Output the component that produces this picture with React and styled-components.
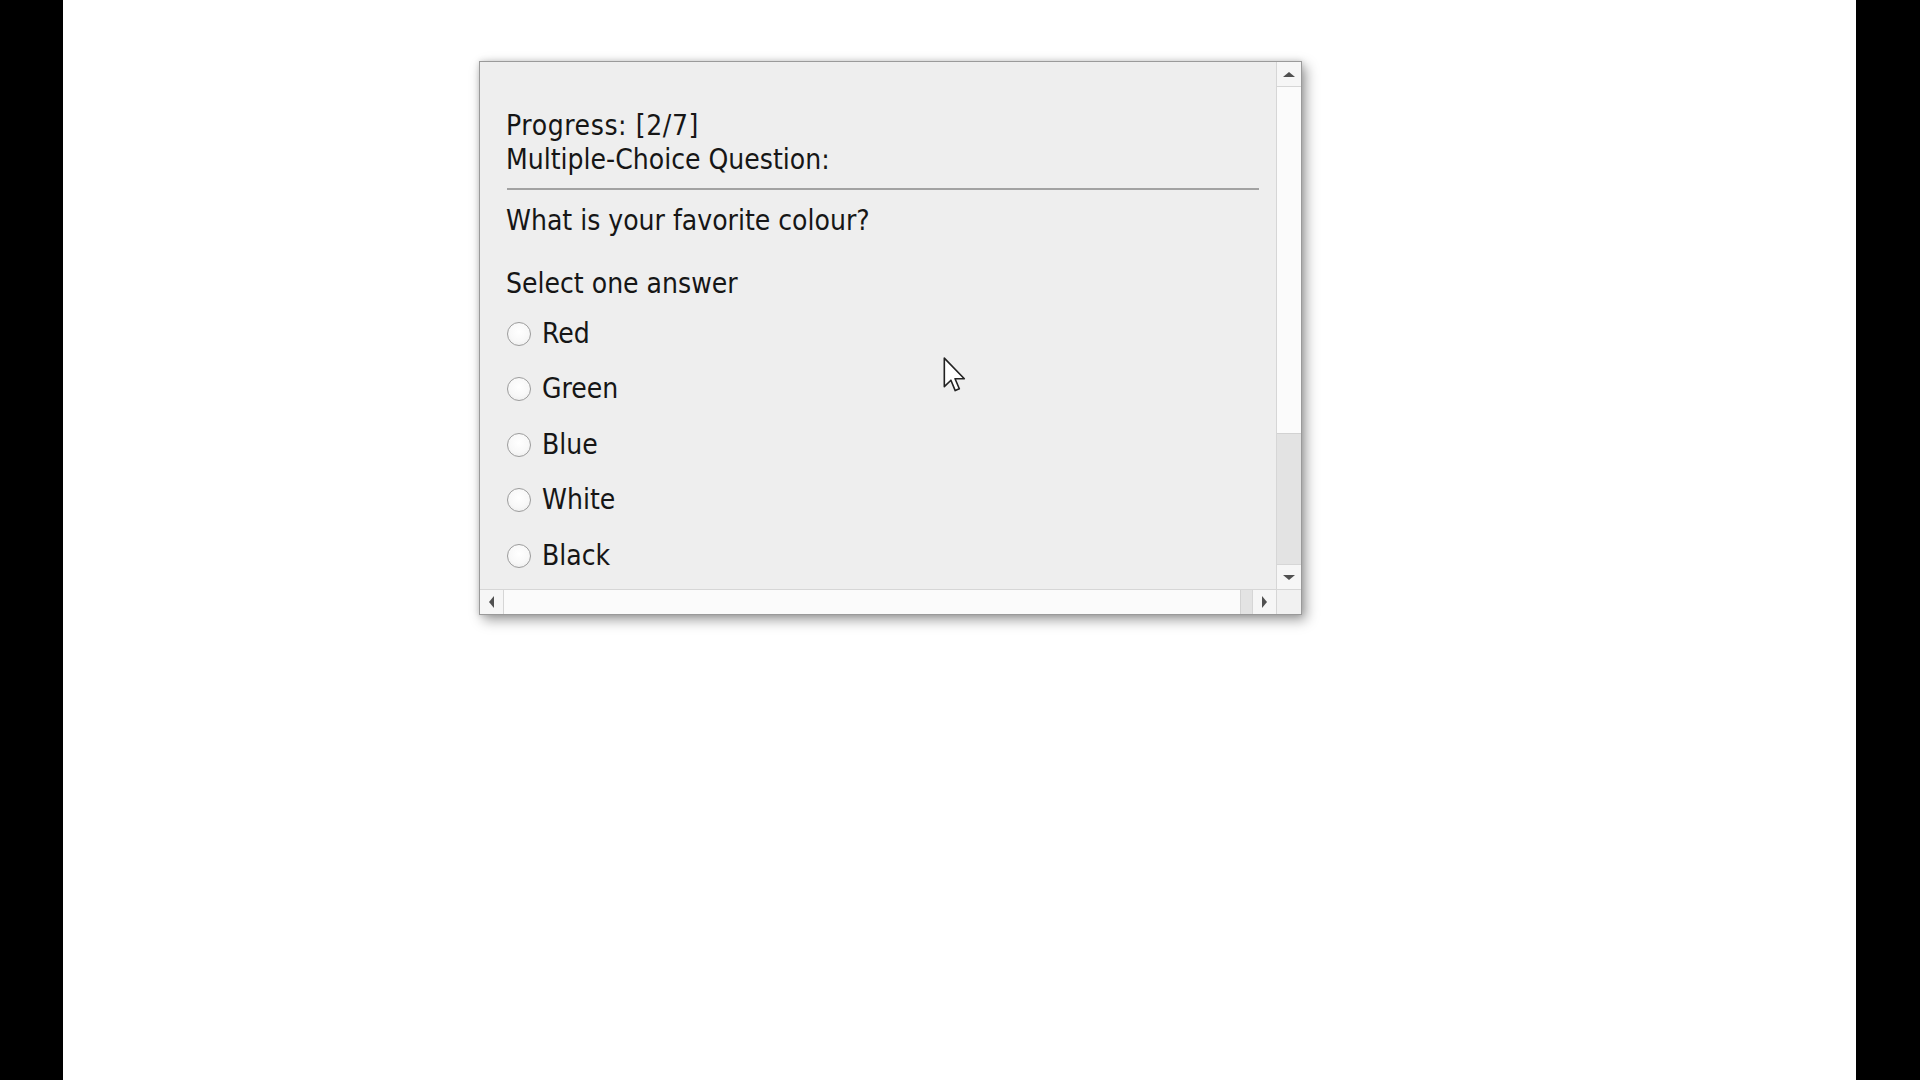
import React from "react";
import styled, { createGlobalStyle } from "styled-components";

const GlobalStyle = createGlobalStyle`
  html, body { margin: 0; padding: 0; background: #ffffff; }
  * { box-sizing: border-box; }
`;

const Screen = styled.div`
  display: flex;
  width: 1920px;
  height: 1080px;
  overflow: hidden;
`;

const SideBar = styled.div`
  width: ${(p) => p.$w}px;
  flex: none;
  background: #000000;
`;

const Stage = styled.div`
  position: relative;
  flex: 1;
  background: #ffffff;
  padding: 61px 0 0 416px;
`;

const Window = styled.div`
  width: 823px;
  height: 554px;
  border: 1px solid #9a9a9a;
  background: #eeeeee;
  display: grid;
  grid-template-columns: 1fr 25px;
  grid-template-rows: 1fr 25px;
  box-shadow: 4px 5px 12px rgba(0, 0, 0, 0.38), 0 0 6px rgba(0, 0, 0, 0.14);
`;

const Content = styled.div`
  overflow: hidden;
  padding: 47px 17px 0 26px;
  font-family: "DejaVu Sans Condensed", "DejaVu Sans", Verdana, sans-serif;
  font-stretch: condensed;
  font-size: 28px;
  line-height: 34px;
  color: #161616;
`;

const Line = styled.div`
  white-space: nowrap;
  margin-top: ${(p) => p.$mt || 0}px;
  letter-spacing: ${(p) => p.$ls || 0}px;
`;

const Divider = styled.div`
  height: 2px;
  background: #a2a2a2;
  margin: 11px 0 0 1px;
`;

const Options = styled.div`
  display: flex;
  flex-direction: column;
  gap: 21.5px;
  margin-top: 16.3px;
`;

const Option = styled.label`
  display: flex;
  align-items: center;
  gap: 11px;
  height: 34px;
  padding-left: 1px;
  cursor: default;
`;

const Radio = styled.span`
  width: 24px;
  height: 24px;
  border-radius: 50%;
  border: 1.5px solid #9c9c9c;
  background: radial-gradient(circle at 50% 40%, #ffffff 0%, #f8f8f8 55%, #e8e8e8 100%);
  flex: none;
`;

const VScroll = styled.div`
  grid-column: 2;
  grid-row: 1;
  display: flex;
  flex-direction: column;
  border-left: 1px solid #d6d6d6;
  background: #fbfbfb;
`;

const HScroll = styled.div`
  grid-column: 1;
  grid-row: 2;
  display: flex;
  border-top: 1px solid #d6d6d6;
  background: #fbfbfb;
`;

const Corner = styled.div`
  grid-column: 2;
  grid-row: 2;
  border-top: 1px solid #d6d6d6;
  border-left: 1px solid #d6d6d6;
  background: #f1f1f1;
`;

const ScrollButton = styled.div`
  flex: none;
  display: flex;
  align-items: center;
  justify-content: center;
  background: #f6f6f6;
  ${(p) =>
    p.$vertical
      ? `height: 25px; ${p.$end ? "border-top" : "border-bottom"}: 1px solid #d6d6d6;`
      : `width: 24px; ${p.$end ? "border-left" : "border-right"}: 1px solid #d6d6d6;`}
`;

const Track = styled.div`
  flex: 1;
  background: #fbfbfb;
`;

const Thumb = styled.div`
  flex: none;
  background: #e3e3e3;
  ${(p) =>
    p.$vertical
      ? `height: ${p.$size}px; border-top: 1px solid #d2d2d2;`
      : `width: ${p.$size}px; border-left: 1px solid #d2d2d2;`}
`;

const Arrow = styled.span`
  width: 0;
  height: 0;
  ${(p) => {
    const c = "#505050";
    switch (p.$dir) {
      case "up":
        return `border-left: 6px solid transparent; border-right: 6px solid transparent; border-bottom: 5px solid ${c};`;
      case "down":
        return `border-left: 6px solid transparent; border-right: 6px solid transparent; border-top: 5px solid ${c};`;
      case "left":
        return `border-top: 6px solid transparent; border-bottom: 6px solid transparent; border-right: 5px solid ${c};`;
      default:
        return `border-top: 6px solid transparent; border-bottom: 6px solid transparent; border-left: 5px solid ${c};`;
    }
  }}
`;

const Pointer = styled.svg`
  position: absolute;
  left: 880px;
  top: 357px;
  pointer-events: none;
`;

const colours = ["Red", "Green", "Blue", "White", "Black"];

export default function App() {
  return (
    <>
      <GlobalStyle />
      <Screen>
        <SideBar $w={63} />
        <Stage>
          <Window>
            <Content>
              <Line $ls={0.6}>Progress: [2/7]</Line>
              <Line>Multiple-Choice Question:</Line>
              <Divider />
              <Line $mt={14}>What is your favorite colour?</Line>
              <Line $mt={28.7}>Select one answer</Line>
              <Options>
                {colours.map((c) => (
                  <Option key={c}>
                    <Radio />
                    {c}
                  </Option>
                ))}
              </Options>
            </Content>
            <VScroll>
              <ScrollButton $vertical>
                <Arrow $dir="up" />
              </ScrollButton>
              <Track />
              <Thumb $vertical $size={131} />
              <ScrollButton $vertical $end>
                <Arrow $dir="down" />
              </ScrollButton>
            </VScroll>
            <HScroll>
              <ScrollButton>
                <Arrow $dir="left" />
              </ScrollButton>
              <Track />
              <Thumb $size={12} />
              <ScrollButton $end>
                <Arrow $dir="right" />
              </ScrollButton>
            </HScroll>
            <Corner />
          </Window>
          <Pointer width="23" height="35" viewBox="0 0 12.6 19.6">
            <path
              d="M0.6 0.6 L0.6 16.6 L4.3 13 L6.7 18.8 L9 17.8 L6.6 12.2 L11.8 12.2 Z"
              fill="#ffffff"
              stroke="#222222"
              strokeWidth="0.9"
              strokeLinejoin="round"
            />
          </Pointer>
        </Stage>
        <SideBar $w={64} />
      </Screen>
    </>
  );
}
